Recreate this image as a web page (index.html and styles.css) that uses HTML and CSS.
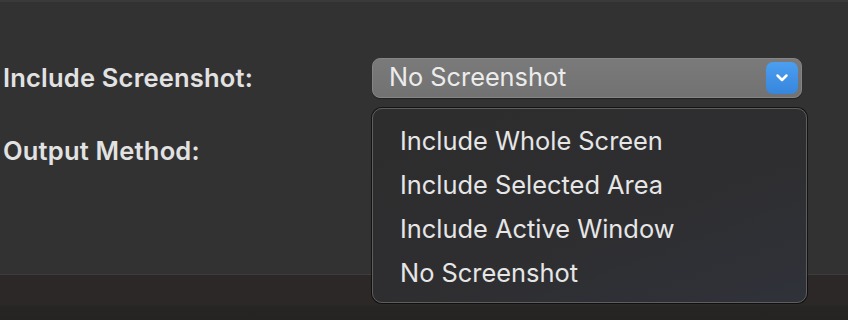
FILE: index.html
```html
<!DOCTYPE html>
<html>
<head>
<meta charset="utf-8">
<link rel="stylesheet" href="styles.css">
</head>
<body>
<div class="window">
  <div class="topline"></div>
  <div class="content">
    <div class="row row-first">
      <div class="label">Include Screenshot:</div>
      <div class="popup">
        <span class="popup-text">No Screenshot</span>
        <span class="stepper">
          <svg width="14" height="10" viewBox="0 0 14 10"><path d="M2.5 2.5 L7 7 L11.5 2.5" fill="none" stroke="#fff" stroke-width="2.5" stroke-linecap="round" stroke-linejoin="round"/></svg>
        </span>
      </div>
    </div>
    <div class="row row-second">
      <div class="label">Output Method:</div>
    </div>
  </div>
  <div class="footer">
    <div class="footer-top"></div>
    <div class="footer-bottom"></div>
  </div>
  <div class="menu">
    <div class="menu-item">Include Whole Screen</div>
    <div class="menu-item">Include Selected Area</div>
    <div class="menu-item">Include Active Window</div>
    <div class="menu-item">No Screenshot</div>
  </div>
</div>
</body>
</html>
```
FILE: styles.css
```css
html, body {
  margin: 0;
  padding: 0;
  background: #323232;
}
.window {
  position: relative;
  width: 848px;
  height: 320px;
  overflow: hidden;
  font-family: Inter, "Liberation Sans", sans-serif;
}
.topline {
  height: 2px;
  background: #3a3a3a;
}
.content {
  height: 272px;
  display: flex;
  flex-direction: column;
  background: #323232;
}
.row {
  display: grid;
  grid-template-columns: 372px 430px;
  align-items: center;
}
.row-first {
  margin-top: 56px;
  height: 40px;
}
.row-second {
  margin-top: 33px;
  height: 40px;
}
.label {
  padding-left: 3px;
  font-size: 25.5px;
  font-weight: 600;
  color: #e2e2e2;
  letter-spacing: 0.2px;
  margin-top: -2px;
}
.popup {
  height: 40px;
  box-sizing: border-box;
  border-radius: 8px;
  background: linear-gradient(#7a7a7a, #727272);
  border: 1px solid #858585;
  box-shadow: 0 1px 1px rgba(0,0,0,0.35);
  display: flex;
  align-items: center;
  justify-content: space-between;
  padding: 0 3px 0 16px;
}
.popup-text {
  font-size: 25.3px;
  color: #ececec;
  margin-top: -3px;
}
.stepper {
  width: 32px;
  height: 32px;
  border-radius: 7px;
  background: linear-gradient(#4b9ef0, #3786dd);
  display: flex;
  align-items: center;
  justify-content: center;
}
.footer {
  height: 46px;
  display: flex;
  flex-direction: column;
}
.footer-top {
  height: 1px;
  background: #3e3c3c;
}
.footer-bottom {
  flex: 1;
  background: linear-gradient(#2c2827 0, #2c2827 30px, #272523 31px, #262422 100%);
}
.menu {
  position: absolute;
  left: 372px;
  top: 108px;
  width: 435px;
  height: 195px;
  box-sizing: border-box;
  border: 1.5px solid #5e5e5e;
  border-radius: 10px;
  background: linear-gradient(160deg, #2d2d2e 0%, #2e2e30 55%, #30323a 100%);
  box-shadow: 0 0 0 1px rgba(0,0,0,0.6);
  padding-top: 10px;
}
.menu-item {
  height: 44px;
  line-height: 44px;
  padding-left: 27px;
  font-size: 25.4px;
  color: #e6e6e6;
}
```
